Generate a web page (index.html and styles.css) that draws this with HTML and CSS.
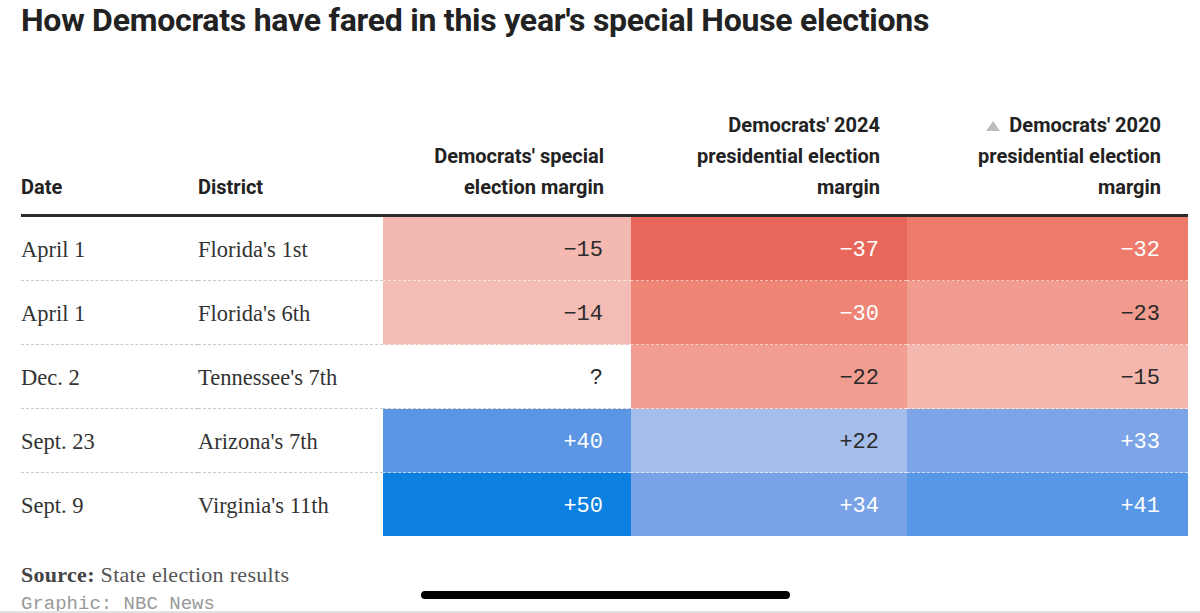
FILE: index.html
```html
<!DOCTYPE html>
<html lang="en">
<head>
<meta charset="utf-8">
<title>How Democrats have fared in this year's special House elections</title>
<link rel="stylesheet" href="styles.css">
</head>
<body>
<main class="page">
  <h1 class="title">How Democrats have fared in this year's special House elections</h1>

  <div class="table">
    <div class="th th-left">Date</div>
    <div class="th th-left">District</div>
    <div class="th th-right">Democrats' special<br>election margin</div>
    <div class="th th-right">Democrats' 2024<br>presidential election<br>margin</div>
    <div class="th th-right"><svg class="tri" width="14" height="10" viewBox="0 0 14 10" aria-hidden="true"><polygon points="7,0 14,10 0,10" fill="#bdbdbd"/></svg>Democrats' 2020<br>presidential election<br>margin</div>

    <div class="td txt">April 1</div>
    <div class="td txt">Florida's 1st</div>
    <div class="td num" style="background-color:#f3b8af">−15</div>
    <div class="td num light" style="background-color:#e9675a">−37</div>
    <div class="td num light" style="background-color:#ee7a6c">−32</div>

    <div class="td txt">April 1</div>
    <div class="td txt">Florida's 6th</div>
    <div class="td num" style="background-color:#f3bcb4">−14</div>
    <div class="td num light" style="background-color:#ee8576">−30</div>
    <div class="td num" style="background-color:#f29c8f">−23</div>

    <div class="td txt">Dec. 2</div>
    <div class="td txt">Tennessee's 7th</div>
    <div class="td num blank">?</div>
    <div class="td num" style="background-color:#f29d91">−22</div>
    <div class="td num" style="background-color:#f3b7ae">−15</div>

    <div class="td txt">Sept. 23</div>
    <div class="td txt">Arizona's 7th</div>
    <div class="td num light" style="background-color:#5c95e4">+40</div>
    <div class="td num" style="background-color:#a5bdea">+22</div>
    <div class="td num light" style="background-color:#7ca4e7">+33</div>

    <div class="td txt last">Sept. 9</div>
    <div class="td txt last">Virginia's 11th</div>
    <div class="td num light last" style="background-color:#0b80e1">+50</div>
    <div class="td num light last" style="background-color:#79a3e6">+34</div>
    <div class="td num light last" style="background-color:#5897e5">+41</div>
  </div>

  <footer class="notes">
    <p class="source"><b>Source:</b> State election results</p>
    <p class="credit">Graphic: NBC News</p>
  </footer>
</main>
<div class="home-indicator"></div>
<div class="bottom-edge"></div>
</body>
</html>
```

FILE: styles.css
```css
html, body {
  margin: 0;
  padding: 0;
  background: #ffffff;
}
body {
  width: 1200px;
  height: 613px;
  overflow: hidden;
  position: relative;
}
.page {
  padding: 2px 12px 0 21px;
}
.title {
  margin: 0;
  font-family: "Roboto", "Liberation Sans", sans-serif;
  font-weight: 700;
  font-size: 32px;
  line-height: 37px;
  color: #222;
  letter-spacing: -0.25px;
}
.table {
  margin-top: 71px;
  display: grid;
  grid-template-columns: 177px 185px 248px 276px 281px;
}
.th {
  font-family: "Roboto", "Liberation Sans", sans-serif;
  font-weight: 700;
  font-size: 20px;
  line-height: 31px;
  color: #222;
  display: flex;
  flex-direction: column;
  justify-content: flex-end;
  padding-bottom: 11px;
  border-bottom: 3px solid #2b2b2b;
}
.th-left { text-align: left; }
.th-right {
  text-align: right;
  padding-right: 27px;
  display: block;
  align-self: end;
}
.tri {
  margin-right: 9px;
  vertical-align: 1px;
}
.td {
  height: 63px;
  display: flex;
  align-items: center;
  border-bottom: 1px dashed #c9c9c9;
  box-sizing: content-box;
}
.td.last {
  border-bottom: none;
}
.txt {
  font-family: "Liberation Serif", "DejaVu Serif", serif;
  font-size: 22.5px;
  color: #333;
  padding-top: 3px;
  height: 60px;
}
.num {
  justify-content: flex-end;
  padding-right: 28px;
  padding-top: 4px;
  height: 59px;
  font-family: "Liberation Mono", "DejaVu Sans Mono", monospace;
  font-size: 22px;
  color: #2a2a2a;
  border-bottom-color: rgba(255, 255, 255, 0.6);
}
.num.blank {
  border-bottom-color: #c9c9c9;
}
.num.light {
  color: #ffffff;
}
.notes {
  margin-top: 26px;
}
.source {
  margin: 0;
  font-family: "Liberation Serif", "DejaVu Serif", serif;
  font-size: 22px;
  letter-spacing: 0.3px;
  line-height: 26px;
  color: #555;
}
.source b {
  color: #444;
}
.credit {
  margin: 4px 0 0;
  font-family: "Liberation Mono", "DejaVu Sans Mono", monospace;
  font-size: 19px;
  line-height: 24px;
  color: #999;
}
.home-indicator {
  position: absolute;
  left: 421px;
  top: 591px;
  width: 369px;
  height: 8px;
  border-radius: 4px;
  background: #000;
}
.bottom-edge {
  position: absolute;
  left: 0;
  right: 0;
  top: 611px;
  height: 2px;
  background: #e2e2e2;
}
```
